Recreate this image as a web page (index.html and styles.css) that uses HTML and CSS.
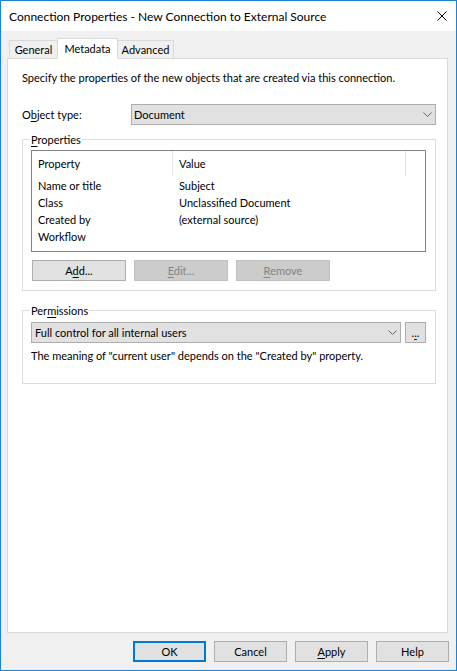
FILE: index.html
```html
<!DOCTYPE html>
<html>
<head>
<meta charset="utf-8">
<link rel="stylesheet" href="styles.css">
</head>
<body>
<div class="window">
  <div class="titlebar">
    <span class="title">Connection Properties - New Connection to External Source</span>
    <svg class="close" width="10" height="10" viewBox="0 0 10 10"><path d="M0.5 0.5 L9.5 9.5 M9.5 0.5 L0.5 9.5" stroke="#000" stroke-width="1" fill="none"/></svg>
  </div>
  <div class="client">
    <div class="tabs">
      <div class="tab t-general">General</div>
      <div class="tab t-meta active">Metadata</div>
      <div class="tab t-adv">Advanced</div>
    </div>
    <div class="panel">
      <p class="intro">Specify the properties of the new objects that are created via this connection.</p>
      <div class="field-row">
        <span class="field-label">O<u>b</u>ject type:</span>
        <div class="combo">
          <span class="combo-text">Document</span>
          <svg class="chev" width="9" height="5" viewBox="0 0 9 5"><path d="M0.5 0.5 L4.5 4.5 L8.5 0.5" stroke="#606060" stroke-width="1" fill="none"/></svg>
        </div>
      </div>
      <fieldset class="group props">
        <legend><u>P</u>roperties</legend>
        <div class="listview">
          <div class="lv-header">
            <div class="lv-h c1">Property</div>
            <div class="lv-h c2">Value</div>
          </div>
          <div class="lv-row"><span class="c1">Name or title</span><span class="c2">Subject</span></div>
          <div class="lv-row"><span class="c1">Class</span><span class="c2">Unclassified Document</span></div>
          <div class="lv-row"><span class="c1">Created by</span><span class="c2">(external source)</span></div>
          <div class="lv-row"><span class="c1">Workflow</span><span class="c2"></span></div>
        </div>
        <div class="btn-row">
          <button class="btn wide">A<u>d</u>d...</button>
          <button class="btn wide" disabled><u>E</u>dit...</button>
          <button class="btn wide" disabled><u>R</u>emove</button>
        </div>
      </fieldset>
      <fieldset class="group perms">
        <legend>Per<u>m</u>issions</legend>
        <div class="perm-row">
          <div class="combo perm-combo">
            <span class="combo-text">Full control for all internal users</span>
            <svg class="chev" width="9" height="5" viewBox="0 0 9 5"><path d="M0.5 0.5 L4.5 4.5 L8.5 0.5" stroke="#606060" stroke-width="1" fill="none"/></svg>
          </div>
          <button class="btn dots">.<u>.</u>.</button>
        </div>
        <p class="note">The meaning of "current user" depends on the "Created by" property.</p>
      </fieldset>
    </div>
  </div>
  <div class="footer">
    <button class="btn foot default">OK</button>
    <button class="btn foot">Cancel</button>
    <button class="btn foot"><u>A</u>pply</button>
    <button class="btn foot">Help</button>
  </div>
</div>
</body>
</html>
```

FILE: styles.css
```css
* { box-sizing: border-box; }
html, body { margin: 0; padding: 0; }
body {
  font-family: Lato, "Liberation Sans", sans-serif;
  font-size: 11px;
  line-height: 15px;
  color: #000;
  background: #fff;
}
u { text-underline-offset: 2px; }
.window {
  width: 457px;
  height: 671px;
  border: 1px solid #1a82d8;
  background: #f0f0f0;
  display: flex;
  flex-direction: column;
}
.titlebar {
  flex: none;
  height: 30px;
  background: #fff;
  display: flex;
  align-items: center;
  justify-content: space-between;
  padding: 0 9px 0 8px;
  font-size: 12px;
}
.close { margin-bottom: 1px; }
.client {
  flex: 1;
  display: flex;
  flex-direction: column;
  padding: 7px 8px 0 6px;
  min-height: 0;
}
.tabs {
  flex: none;
  height: 21px;
  margin-bottom: -1px;
  padding-left: 2px;
  display: flex;
  align-items: flex-end;
  position: relative;
  z-index: 1;
}
.tab {
  height: 19px;
  border: 1px solid #d9d9d9;
  background: #f0f0f0;
  margin-right: -1px;
  text-align: center;
  line-height: 18px;
}
.t-general { width: 49px; }
.t-meta { width: 61px; }
.t-adv { width: 57px; }
.tab.active {
  height: 21px;
  background: #fff;
  border-bottom-color: #fff;
  line-height: 20px;
  position: relative;
  z-index: 2;
}
.panel {
  flex: 1;
  background: #fff;
  border: 1px solid #d9d9d9;
  padding: 11px 11px 0 14px;
}
.intro { margin: 0; }
.field-row {
  margin-top: 19px;
  display: flex;
  align-items: center;
  height: 21px;
}
.field-label { width: 109px; flex: none; }
.combo {
  flex: 1;
  height: 21px;
  background: #e1e1e1;
  border: 1px solid #adadad;
  display: flex;
  align-items: center;
  justify-content: space-between;
  padding: 0 3px 0 2px;
}
.perm-combo { padding-left: 3px; }
.chev { flex: none; }
.group {
  margin: 7px 0 0;
  border: 1px solid #dcdcdc;
  padding: 3px 9px 9px 8px;
  min-width: 0;
}
.group legend {
  padding: 0 1px;
  margin-left: -1px;
  line-height: 15px;
}
.listview {
  height: 102px;
  border: 1px solid #828282;
  background: #fff;
}
.lv-header {
  height: 26px;
  display: flex;
}
.lv-h {
  height: 25px;
  line-height: 26px;
  padding-left: 6px;
  border-right: 1px solid #e5e5e5;
}
.c1 { width: 141px; flex: none; padding-left: 6px; }
.c2 { width: 233px; flex: none; padding-left: 6px; }
.lv-row {
  height: 17px;
  line-height: 17px;
  display: flex;
}
.btn {
  font: inherit;
  color: #000;
  background: #e1e1e1;
  border: 1px solid #adadad;
  height: 21px;
  padding: 0;
  margin: 0;
  line-height: 17px;
}
.btn:disabled {
  background: #cccccc;
  border-color: #bfbfbf;
  color: #838383;
}
.btn-row {
  margin-top: 8px;
  padding-left: 1px;
  display: flex;
  gap: 8px;
}
.wide { width: 94px; }
.perms { margin-top: 12px; padding: 4px 9px 20px 8px; }
.perm-row {
  display: flex;
  gap: 4px;
}
.dots { width: 21px; flex: none; }
.note { margin: 5px 0 0; }
.footer {
  flex: none;
  height: 37px;
  padding: 8px 7px 8px 0;
  display: flex;
  justify-content: flex-end;
  gap: 8px;
}
.foot { width: 73px; }
.default { border: 2px solid #0078d7; }
```
